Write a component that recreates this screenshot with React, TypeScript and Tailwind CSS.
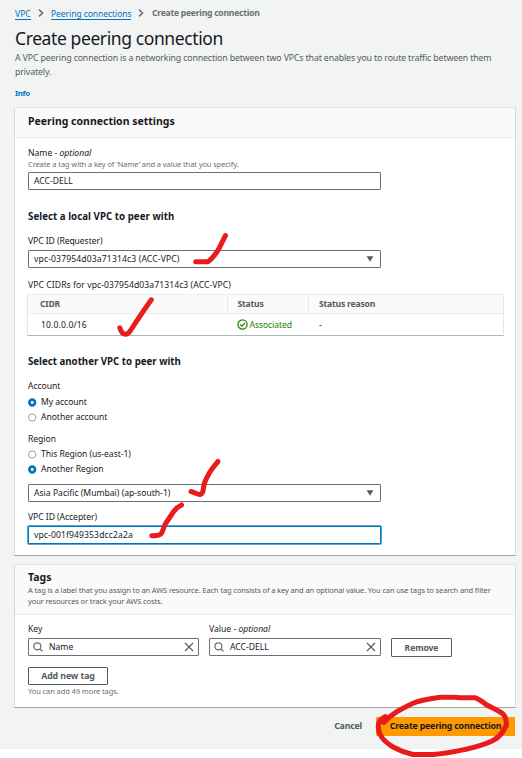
import type { ReactNode } from "react";

function Chevron() {
  return (
    <svg viewBox="0 0 6 8" className="h-[8px] w-[6px] shrink-0" fill="none" stroke="#687078" strokeWidth="1.5">
      <path d="M1 0.6 4.6 4 1 7.4" />
    </svg>
  );
}

function Caret() {
  return (
    <svg viewBox="0 0 8 6" className="h-[6px] w-[8px]" fill="#545b64">
      <path d="M0.6 0.3h6.800L4 5.800z" />
    </svg>
  );
}

function SearchIcon() {
  return (
    <svg viewBox="0 0 10 10" className="h-[10px] w-[10px] shrink-0" fill="none" stroke="#687078" strokeWidth="1.3">
      <circle cx="4.4" cy="4.3" r="3.5" />
      <path d="M7 7l2.400 2.300" />
    </svg>
  );
}

function CloseIcon() {
  return (
    <svg viewBox="0 0 10 10" className="h-[10px] w-[10px] shrink-0" fill="none" stroke="#545b64" strokeWidth="1.2">
      <path d="M1 1l8 8M9 1L1 9" />
    </svg>
  );
}

function CheckCircle() {
  return (
    <svg viewBox="0 0 11 11" className="h-[11px] w-[11px] shrink-0" fill="none" stroke="#1d8102" strokeWidth="1.2">
      <circle cx="5.5" cy="5.5" r="4.6" />
      <path d="M3.200 5.500l1.700 1.600 3-3.100" />
    </svg>
  );
}

function SelectBox({ children }: { children: ReactNode }) {
  return (
    <div className="flex h-[18px] w-[353px] items-center justify-between rounded-[1px] border border-[#687078] bg-white pr-[6px] pl-[5px] text-[8.6px]">
      {children}
      <Caret />
    </div>
  );
}

function Radio({ label, on = false }: { label: string; on?: boolean }) {
  return (
    <div className="flex h-[15px] items-center gap-[4px] text-[8.6px] tracking-[-0.05px]">
      <svg viewBox="0 0 9 9" className="h-[9px] w-[9px]" fill="white">
        {on ? (
          <circle cx="4.200" cy="4.500" r="2.800" stroke="#0073bb" strokeWidth="2.700" />
        ) : (
          <circle cx="4.200" cy="4.500" r="3.700" stroke="#8d959c" strokeWidth="0.900" />
        )}
      </svg>
      <span>{label}</span>
    </div>
  );
}

function TagInput({ value, width }: { value: string; width: string }) {
  return (
    <div className={`flex h-[18px] items-center rounded-[1px] border border-[#687078] bg-white px-[4px] text-[8.6px] ${width}`}>
      <SearchIcon />
      <span className="ml-[6px] flex-1 pt-px">{value}</span>
      <CloseIcon />
    </div>
  );
}

const card = "ml-[14px] w-[502px] border border-t-[#e3e7e7] border-x-[#d5dbdb] border-b-[#9da5a5] bg-white";

export default function App() {
  return (
    <div className="relative h-[758px] w-[522px] overflow-hidden bg-white font-['Noto_Sans','Open_Sans',sans-serif] whitespace-nowrap text-[#16191f]">
      <div className="h-[749px] bg-[#f2f3f3] pt-[6px]">
        <nav className="flex h-[14px] items-center pl-[15px] text-[8.6px] text-[#0073bb]">
          <a className="h-[13px] w-[16px] border-b border-[#0073bb] leading-[14px]">VPC</a>
          <span className="ml-[7px] flex"><Chevron /></span>
          <a className="ml-[7px] h-[13px] w-[80px] border-b border-[#0073bb] leading-[14px] tracking-[-0.1px]">Peering connections</a>
          <span className="ml-[7px] flex"><Chevron /></span>
          <span className="ml-[8px] font-bold tracking-[-0.25px] text-[#687078]">Create peering connection</span>
        </nav>
        <h1 className="mt-[6px] h-[24px] pl-[15px] text-[17.5px] leading-[24px] tracking-[-0.4px]">Create peering connection</h1>
        <p className="mt-[1px] h-[28px] pl-[15px] text-[8.8px] leading-[14px] tracking-[-0.15px] text-[#545b64]">
          A VPC peering connection is a networking connection between two VPCs that enables you to route traffic between them
          <br />
          privately.
        </p>
        <div className="mt-[7px] h-[14px] pl-[15px] text-[7.8px] leading-[14px] font-bold tracking-[-0.3px] text-[#0073bb]">Info</div>

        <section className={`mt-[7px] h-[449px] ${card}`}>
          <header className="h-[30px] border-b border-[#eaeded] bg-[#fafafa] pl-[13px] text-[10.5px] leading-[27px] font-bold">
            Peering connection settings
          </header>
          <div className="pl-[13px]">
            <div className="h-[21px] pt-[9px] text-[8.6px] leading-[12px]">Name - <i>optional</i></div>
            <div className="h-[13px] text-[7.5px] leading-[10px] tracking-[-0.1px] text-[#687078]">
              Create a tag with a key of 'Name' and a value that you specify.
            </div>
            <div className="h-[18px] w-[353px] rounded-[1px] border border-[#687078] bg-white pl-[5px] text-[8.6px] leading-[16px]">ACC-DELL</div>
            <h2 className="mt-[18px] h-[16px] text-[9.7px] leading-[18px] font-bold tracking-[0.04px]">Select a local VPC to peer with</h2>
            <div className="mt-[9px] h-[17px] text-[8.6px] leading-[16px] tracking-[-0.08px]">VPC ID (Requester)</div>
            <SelectBox><span className="tracking-[0.13px]">vpc-037954d03a71314c3 (ACC-VPC)</span></SelectBox>
            <div className="mt-[8px] h-[18px] text-[8.6px] leading-[18px] tracking-[0.07px]">VPC CIDRs for vpc-037954d03a71314c3 (ACC-VPC)</div>
            <div className="-ml-px h-[42px] w-[477px] border border-x-[#e3e7e7] border-t-[#eaeded] border-b-[#aab7b8] text-[8.6px]">
              <div className="flex h-[19px] items-center border-b border-[#eaeded] bg-[#fafafa] font-bold tracking-[-0.2px] text-[#545b64]">
                <span className="w-[199px] pl-[12px]">CIDR</span>
                <span className="h-[12px] w-[81px] border-l border-[#e3e7e7] pl-[9.5px] leading-[12px]">Status</span>
                <span className="h-[12px] border-l border-[#e3e7e7] pl-[10px] leading-[12px]">Status reason</span>
              </div>
              <div className="flex h-[21px] items-center pt-px">
                <span className="w-[209px] pl-[13px] tracking-[0.12px]">10.0.0.0/16</span>
                <span className="flex w-[82px] items-center gap-[1.5px] tracking-[-0.1px] text-[#1d8102]"><CheckCircle /><span>Associated</span></span>
                <span>-</span>
              </div>
            </div>
            <h2 className="mt-[17px] h-[16px] text-[9.7px] leading-[18px] font-bold">Select another VPC to peer with</h2>
            <div className="mt-[9px] h-[17px] text-[8.6px] leading-[16px] tracking-[-0.05px]">Account</div>
            <Radio label="My account" on />
            <Radio label="Another account" />
            <div className="mt-[6px] h-[16px] text-[8.6px] leading-[17px] tracking-[-0.05px]">Region</div>
            <Radio label="This Region (us-east-1)" />
            <Radio label="Another Region" on />
            <div className="mt-[7px]"><SelectBox><span>Asia Pacific (Mumbai) (ap-south-1)</span></SelectBox></div>
            <div className="mt-[6px] h-[18px] text-[8.6px] leading-[18px] tracking-[-0.06px]">VPC ID (Accepter)</div>
            <div className="h-[18px] w-[353px] rounded-[1px] border border-[#0073bb] bg-white pl-[5px] text-[8.6px] leading-[16px] tracking-[0.1px] shadow-[0_0_0_1px_#5ba6d6]">
              vpc-001f949353dcc2a2a
            </div>
          </div>
        </section>

        <section className={`mt-[8px] h-[144px] ${card}`}>
          <header className="h-[50px] border-b border-[#eaeded] bg-[#fafafa] pt-[5px] pl-[13px]">
            <h2 className="h-[15px] text-[10.5px] leading-[15px] font-bold">Tags</h2>
            <p className="text-[7.5px] leading-[10.5px] tracking-[-0.117px] text-[#545b64]">
              A tag is a label that you assign to an AWS resource. Each tag consists of a key and an optional value. You can use tags to search and filter
              <br />
              your resources or track your AWS costs.
            </p>
          </header>
          <div className="pl-[13px]">
            <div className="flex pt-[7px]">
              <div className="w-[181px]">
                <div className="h-[16px] text-[8.6px] leading-[15px]">Key</div>
                <TagInput value="Name" width="w-[171px]" />
              </div>
              <div className="w-[182px]">
                <div className="h-[16px] text-[8.6px] leading-[15px]">Value - <i>optional</i></div>
                <TagInput value="ACC-DELL" width="w-[172px]" />
              </div>
              <button className="mt-[16px] h-[19px] w-[61px] rounded-[1px] border border-[#545b64] bg-white text-[8.6px] leading-[18px] font-bold tracking-[-0.1px] text-[#545b64]">Remove</button>
            </div>
            <button className="mt-[10px] block h-[18px] w-[80px] rounded-[1px] border border-[#545b64] bg-white text-[8.8px] leading-[16px] font-bold tracking-[-0.1px] text-[#545b64]">Add new tag</button>
            <div className="h-[12px] text-[7.5px] leading-[12px] tracking-[-0.1px] text-[#687078]">You can add 49 more tags.</div>
          </div>
        </section>

        <footer className="mt-[9px] flex h-[19px] items-center justify-end pr-[7px] text-[8.8px] font-bold tracking-[-0.2px]">
          <button className="mr-[14px] pt-px text-[#545b64]">Cancel</button>
          <button className="h-[19px] w-[139px] rounded-[1px] bg-[#ff9900] pt-px text-[#16191f]">Create peering connection</button>
        </footer>
      </div>

      <svg viewBox="0 0 522 758" className="absolute inset-0 h-[758px] w-[522px]" fill="none" stroke="#e81c1c" strokeWidth="5" strokeLinecap="round" strokeLinejoin="round">
        <path d="M195.700 261.700H208C212 259 214 255.500 216.700 252.300C220 247.500 223 240 225.500 235.500" />
        <path d="M119.800 327.800C121 332 123 334.300 125.700 334.300C128 334.300 129 332.500 130.500 330.500C137 320.500 144 310 151.300 299.800" />
        <path d="M191 491.500C194 492 197 494.500 200 494.500C204 494 203 487 204.500 483C206 479 207 477 209.300 473C212 468 215 465 218 461.500" />
        <path d="M151.700 535.700C156 535.500 159.500 536 161.300 533.500C163.500 530.500 163.500 527 165.300 524L173 512.500C175.500 508.500 178 506.500 181.500 504.900" />
        <path d="M385.500 716.500C379 719.500 378 723 378.200 727C378.500 735 383 741 393 747C402 752 406 753 413 754.500H433C447 753.500 457 751 467 749C478 746.500 486 744 493 740.500C500 737 503 732 506.300 725.500C506.500 720 506 717 503 714C498 710 491 707.500 486 704.500C482 701.500 480 699.500 475.500 697.800H460L454 697.300H440C428 699 419 700.500 412 703.700C401 709 391 714 384 722.500L382 719.500" />
      </svg>
    </div>
  );
}
